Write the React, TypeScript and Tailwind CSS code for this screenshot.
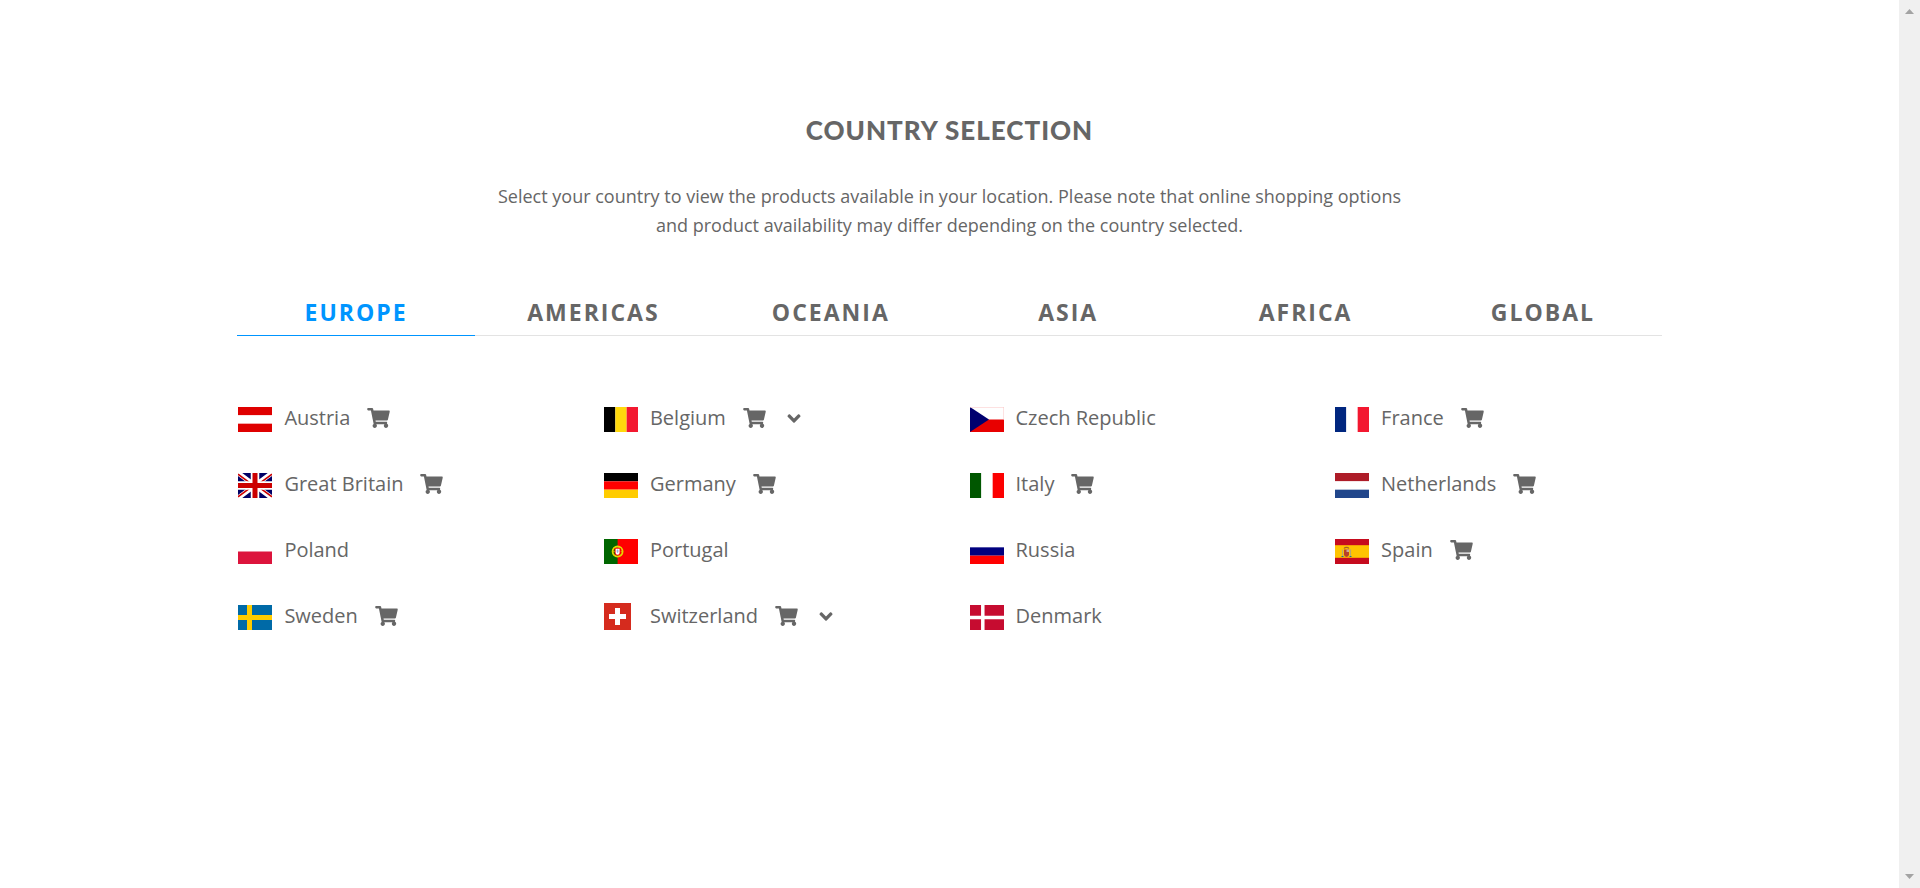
import { useState, type ReactNode } from "react";
import { FaAngleDown, FaShoppingCart } from "react-icons/fa";

type Country = { name: string; flag: ReactNode; shop?: boolean; more?: boolean };

function Flag({ children }: { children: ReactNode }) {
  return (
    <svg viewBox="0 0 34 25" className="block h-[25px] w-[34px]" aria-hidden="true">
      {children}
    </svg>
  );
}

function Rows({ colors }: { colors: string[] }) {
  return (
    <Flag>
      {colors.map((c, i) => (
        <rect key={i} y={(i * 25) / colors.length} width="34" height={25 / colors.length} fill={c} />
      ))}
    </Flag>
  );
}

function Columns({ colors }: { colors: string[] }) {
  return (
    <Flag>
      {colors.map((c, i) => (
        <rect key={i} x={(i * 34) / 3} width={34 / 3} height="25" fill={c} />
      ))}
    </Flag>
  );
}

const countries: Country[] = [
  { name: "Austria", shop: true, flag: <Rows colors={["#df0000", "#fff", "#df0000"]} /> },
  { name: "Belgium", shop: true, more: true, flag: <Columns colors={["#000", "#ffd90c", "#f31830"]} /> },
  {
    name: "Czech Republic",
    flag: (
      <Flag>
        <rect width="34" height="25" fill="#e80000" />
        <rect width="34" height="12.5" fill="#fff" />
        <path d="M0 0 19 12.5 0 25z" fill="#00006f" />
        <path d="M0 0H34V12.5" fill="none" stroke="#fbc4c4" strokeWidth="1" />
      </Flag>
    ),
  },
  { name: "France", shop: true, flag: <Columns colors={["#00267f", "#fff", "#f31830"]} /> },
  {
    name: "Great Britain",
    shop: true,
    flag: (
      <Flag>
        <rect width="34" height="25" fill="#006" />
        <path d="M0 0 34 25M34 0 0 25" stroke="#fff" strokeWidth="5" />
        <path d="M0 1.2 17 13.7M17 11.3 34 23.8M34 1.2 17 13.7M17 11.3 0 23.8" stroke="#c00" strokeWidth="1.5" />
        <path d="M17 0V25M0 12.5H34" stroke="#fff" strokeWidth="8.5" />
        <path d="M17 0V25M0 12.5H34" stroke="#c00" strokeWidth="5" />
      </Flag>
    ),
  },
  { name: "Germany", shop: true, flag: <Rows colors={["#000", "#f00", "#fc0"]} /> },
  { name: "Italy", shop: true, flag: <Columns colors={["#005700", "#fff", "#fc0000"]} /> },
  { name: "Netherlands", shop: true, flag: <Rows colors={["#ae1c28", "#fff", "#21468b"]} /> },
  { name: "Poland", flag: <Rows colors={["#fff", "#dc143c"]} /> },
  {
    name: "Portugal",
    flag: (
      <Flag>
        <rect width="34" height="25" fill="#f00" />
        <rect width="13.6" height="25" fill="#060" />
        <circle cx="13.6" cy="12.5" r="5" fill="none" stroke="#e6d800" strokeWidth="1.8" />
        <path d="M8.5 12.5H18.7M10 8.5 17 16.5" stroke="#d8c800" strokeWidth=".7" />
        <path d="M10.6 9h6v4.5a3 3 0 0 1-6 0z" fill="#f00" />
        <path d="M11.6 9.8h4v4a2 2 0 0 1-4 0z" fill="#fff" />
        <path d="M13.6 10.5v3.5M12.4 12h2.4" stroke="#7d8fc9" strokeWidth=".7" />
      </Flag>
    ),
  },
  { name: "Russia", flag: <Rows colors={["#fff", "#00007f", "#f00"]} /> },
  {
    name: "Spain",
    shop: true,
    flag: (
      <Flag>
        <rect width="34" height="25" fill="#c60b1e" />
        <rect y="6.2" width="34" height="12.6" fill="#ffc400" />
        <path d="M7.5 10.5v7M15.5 10.5v7" stroke="#b5a878" strokeWidth="1.2" />
        <path d="M9 10.5h5v5a2.5 2.5 0 0 1-5 0z" fill="#b8402a" />
        <path d="M11.5 10.5h2.5v2.5h-2.5z" fill="#c9a9a0" />
        <path d="M9 9.5c1-1.5 4-1.5 5 0" fill="none" stroke="#a5642a" strokeWidth="1.2" />
        <path d="M6.5 17.5h2M14.5 17.5h2" stroke="#1e6f8e" strokeWidth="1" />
      </Flag>
    ),
  },
  {
    name: "Sweden",
    shop: true,
    flag: (
      <Flag>
        <rect width="34" height="25" fill="#006aa7" />
        <path d="M11.5 0V25M0 12.5H34" stroke="#fc0" strokeWidth="5" />
      </Flag>
    ),
  },
  {
    name: "Switzerland",
    shop: true,
    more: true,
    flag: (
      <svg viewBox="0 0 27 27" className="block size-[27px]" aria-hidden="true">
        <rect width="27" height="27" fill="#d52b1e" />
        <path d="M13.5 5V22M5 13.5H22" stroke="#fff" strokeWidth="5" />
      </svg>
    ),
  },
  {
    name: "Denmark",
    flag: (
      <Flag>
        <rect width="34" height="25" fill="#c60c30" />
        <path d="M12.8 0V25M0 12.5H34" stroke="#fff" strokeWidth="3.5" />
      </Flag>
    ),
  },
];

const regions = ["Europe", "Americas", "Oceania", "Asia", "Africa", "Global"];

function CountryItem({ country }: { country: Country }) {
  return (
    <li className="flex h-8 items-center text-xl">
      <a href="#" className="flex items-center">
        <span className="mr-3 flex h-7 w-[35px] items-end pl-px">{country.flag}</span>
        <span>{country.name}</span>
        {country.shop && <FaShoppingCart className="ml-[17px] h-5 w-[23px]" aria-label="Online shop" />}
      </a>
      {country.more && (
        <button type="button" className="ml-[21px]" aria-label={`${country.name} languages`}>
          <FaAngleDown className="h-[21px] w-[14px]" />
        </button>
      )}
    </li>
  );
}

export default function App() {
  const [region, setRegion] = useState("Europe");
  return (
    <div className="flex min-h-screen bg-white font-['Open_Sans',sans-serif] text-[#666]">
      <main className="min-w-0 flex-1 pt-[112px]">
        <h1 className="text-center font-['Lato',sans-serif] text-[26px] leading-9 font-black tracking-[1px] uppercase">
          Country Selection
        </h1>
        <p className="mx-auto mt-[34px] max-w-[920px] text-center text-lg leading-[29px]">
          Select your country to view the products available in your location. Please note that online shopping options
          and product availability may differ depending on the country selected.
        </p>
        <div className="mx-auto w-3/4">
          <div role="tablist" className="mt-12 grid grid-cols-6">
            {regions.map((name) => (
              <button
                key={name}
                type="button"
                role="tab"
                aria-selected={name === region}
                onClick={() => setRegion(name)}
                className={
                  name === region
                    ? "h-12 border-b border-[#0095ff] pt-0.5 text-[23px] font-bold tracking-[2px] text-[#0095ff] uppercase"
                    : "h-12 border-b border-[#e3e3e3] pt-0.5 text-[23px] font-bold tracking-[2px] uppercase"
                }
              >
                {name}
              </button>
            ))}
          </div>
          <ul className="mt-[66px] grid grid-cols-4 gap-x-[38px] gap-y-[34px]">
            {countries.map((c) => (
              <CountryItem key={c.name} country={c} />
            ))}
          </ul>
        </div>
      </main>
      <div className="flex w-[21px] flex-col items-center justify-between bg-[#f0f0f0] py-[9px]" aria-hidden="true">
        <svg viewBox="0 0 9 5" className="h-[5px] w-[9px]">
          <path d="M4.5 0 9 5H0z" fill="#a3a3a3" />
        </svg>
        <svg viewBox="0 0 9 5" className="h-[5px] w-[9px]">
          <path d="M0 0H9L4.5 5z" fill="#a3a3a3" />
        </svg>
      </div>
    </div>
  );
}
